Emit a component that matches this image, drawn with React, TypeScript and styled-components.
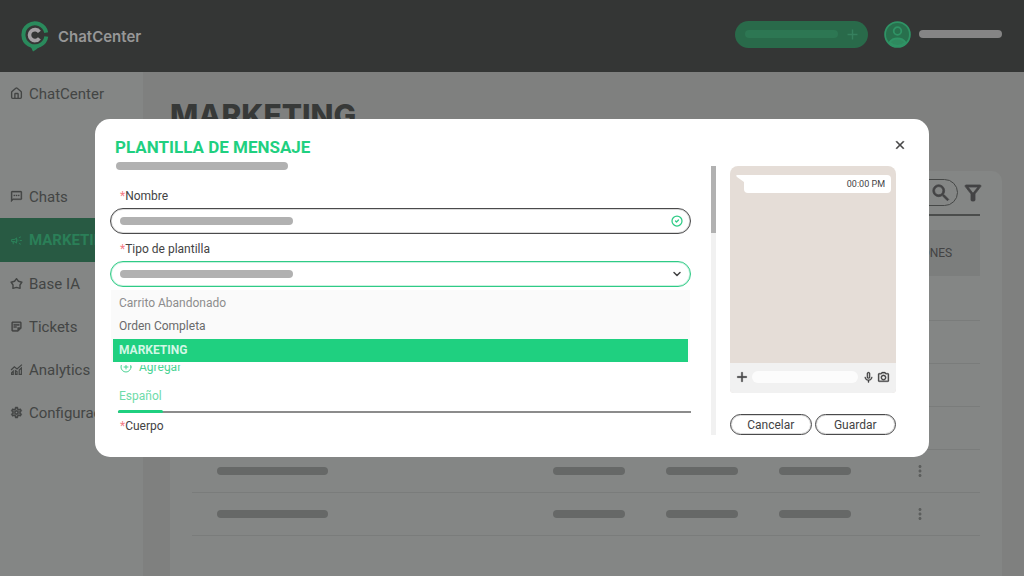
import React from "react";
import styled, { createGlobalStyle } from "styled-components";
import {
  MdOutlineSms,
  MdOutlineCampaign,
  MdOutlineStickyNote2,
  MdOutlineSettings,
  MdSearch,
  MdOutlineFilterAlt,
  MdMoreVert,
  MdMicNone,
  MdOutlineCameraAlt,
  MdAdd,
  MdClose,
} from "react-icons/md";
import { House, CircleCheck, ChevronDown, CirclePlus } from "lucide-react";

const GlobalStyle = createGlobalStyle`
  *, *::before, *::after { box-sizing: border-box; }
  body {
    margin: 0;
    background: #7f807f;
    font-family: Roboto, "Liberation Sans", sans-serif;
    color: #434344;
  }
  button, input, select { font: inherit; color: inherit; }
  button { cursor: pointer; }
  svg { display: block; flex: none; }
  svg[stroke-width] > path[fill="none"] { stroke: none; }
`;

const Shell = styled.div`
  min-height: 100vh;
  display: flex;
  flex-direction: column;
`;

const TopBar = styled.header`
  height: 72px;
  padding: 0 22px 4px 21px;
  display: flex;
  align-items: center;
  background: #343635;
`;

const Brand = styled.a`
  display: flex;
  align-items: center;
  gap: 9px;
  margin-right: auto;
  padding-top: 5px;
  color: #979797;
  font: 600 15px/20px Inter, sans-serif;
  text-decoration: none;
`;

const Skeleton = styled.span<{ $width: number; $color?: string }>`
  display: block;
  flex: none;
  width: ${(p) => p.$width}px;
  height: 8px;
  border-radius: 4px;
  background: ${(p) => p.$color ?? "#b1b1b1"};
`;

const CreateButton = styled.button`
  height: 27px;
  width: 133px;
  padding: 0 7px 0 10px;
  display: flex;
  align-items: center;
  justify-content: space-between;
  border: 0;
  border-radius: 14px;
  background: #296a4a;
  color: #36805e;
`;

const Account = styled.button`
  margin-left: 16px;
  padding: 0;
  display: flex;
  align-items: center;
  gap: 8px;
  border: 0;
  background: none;
`;

const Columns = styled.div`
  flex: 1;
  display: flex;
`;

const Sidebar = styled.nav`
  flex: none;
  width: 143px;
  background: #848685;
`;

const NavLink = styled.a<{ $active?: boolean; $last?: boolean }>`
  height: ${(p) => (p.$active ? 44 : 43)}px;
  margin-bottom: ${(p) => (p.$last ? 60 : 0)}px;
  padding-left: 10px;
  display: flex;
  align-items: center;
  gap: 6px;
  overflow: hidden;
  font-size: 15px;
  font-weight: ${(p) => (p.$active ? 700 : 400)};
  text-decoration: none;
  color: ${(p) => (p.$active ? "#2b7f58" : "#434544")};
  background: ${(p) => (p.$active ? "#285a43" : "none")};
`;

const Main = styled.main`
  flex: 1;
  min-width: 0;
  padding: 25px 22px 0 27px;
  display: flex;
  flex-direction: column;
`;

const PageTitle = styled.h1`
  margin: 0 0 38px;
  font: 800 30px/36px Inter, sans-serif;
  color: #373938;
`;

const Card = styled.section`
  flex: 1;
  padding: 8px 22px 0;
  border-radius: 10px 10px 0 0;
  background: #848685;
`;

const Toolbar = styled.div`
  display: flex;
  align-items: center;
  justify-content: flex-end;
  gap: 3px;
  margin-bottom: 14px;
  padding-bottom: 8px;
  border-bottom: 2px solid #4b4d4c;
`;

const SearchBox = styled.label`
  width: 220px;
  height: 27px;
  padding: 0 5px 0 12px;
  display: flex;
  align-items: center;
  border: 1px solid #464847;
  border-radius: 14px;
`;

const BareInput = styled.input`
  flex: 1;
  min-width: 0;
  padding: 0;
  border: 0;
  outline: 0;
  background: none;
`;

const IconButton = styled.button`
  padding: 0;
  border: 0;
  background: none;
`;

const FilterButton = styled(IconButton)`
  width: 19px;
`;

const CloseButton = styled(IconButton)`
  padding: 3px;
`;

const Table = styled.table`
  width: 100%;
  border-collapse: collapse;
  table-layout: fixed;

  th {
    height: 47px;
    padding: 0;
    border-bottom: 3px solid #848685;
    background: #7c7e7d;
    font-size: 12px;
    font-weight: 400;
  }
  td {
    height: 43px;
    padding: 0 0 0 25px;
    border-bottom: 1px solid #7a7c7b;
  }
  td:last-child { padding: 0 8px 0 0; }
  td button { margin: 0 auto; display: block; color: #5c5e5d; }
`;

const Overlay = styled.div`
  position: fixed;
  inset: 0;
  padding: 0 95px;
  display: grid;
  align-items: center;
`;

const Dialog = styled.div`
  padding: 16px 19px 22px 15px;
  border-radius: 15px;
  background: #fff;
`;

const DialogHeader = styled.div`
  display: flex;
  align-items: flex-start;
  justify-content: space-between;
  padding-left: 5px;
  margin-bottom: 3px;
`;

const DialogTitle = styled.h2`
  margin: 0;
  font-size: 17px;
  line-height: 24px;
  font-weight: 700;
  color: #1fd080;
`;

const DialogBody = styled.div`
  display: flex;
  padding-right: 14px;
`;

const Form = styled.form`
  flex: 1;
  min-width: 0;
  padding-bottom: 1px;
  font-size: 12px;
  line-height: 16px;
`;

const Intro = styled.div`
  padding-left: 6px;
  margin-bottom: 18px;
`;

const Field = styled.div`
  position: relative;
  margin-bottom: 7px;
`;

const Label = styled.label`
  display: block;
  padding-left: 10px;
  margin-bottom: 4px;

  &:last-child { margin-bottom: 0; }
`;

const Required = styled.span`
  color: #f47c86;
`;

const Control = styled.div<{ $focused?: boolean }>`
  height: 26px;
  padding: 0 7px 0 9px;
  display: flex;
  align-items: center;
  border: 1px solid ${(p) => (p.$focused ? "#2fcb86" : "#4a4a4b")};
  border-radius: 13px;
  box-shadow: inset 0 0 0 1px ${(p) => (p.$focused ? "#2fcb8644" : "#4a4a4b33")};
`;

const BareSelect = styled.select`
  flex: 1;
  min-width: 0;
  height: 20px;
  border: 0;
  outline: 0;
  appearance: none;
  background: none;
`;

const Menu = styled.ul`
  position: absolute;
  top: 100%;
  left: 1px;
  right: 1px;
  margin: 3px 0 0;
  padding: 2px 2px 0;
  list-style: none;
  background: #fafafa;
  border-bottom: 3px solid #fff;
`;

const Option = styled.li<{ $tone: string; $selected?: boolean }>`
  margin-top: ${(p) => (p.$selected ? 1 : 0)}px;
  padding-left: 6px;
  line-height: 23px;
  color: ${(p) => p.$tone};
  font-weight: ${(p) => (p.$selected ? 700 : 400)};
  background: ${(p) => (p.$selected ? "#1fd080" : "none")};
`;

const AddButton = styled.button`
  margin: 72px 0 13px;
  padding: 0 0 0 10px;
  display: flex;
  align-items: center;
  gap: 7px;
  border: 0;
  background: none;
  color: #4bd394;
`;

const TabList = styled.div`
  margin: 0 0 5px 8px;
  border-bottom: 2px solid #8c8c8c;
`;

const Tab = styled.button`
  position: relative;
  display: block;
  padding: 0 1px 7px;
  border: 0;
  background: none;
  color: #6fdba9;

  &::after {
    content: "";
    position: absolute;
    left: 0;
    right: 0;
    bottom: -2px;
    height: 3px;
    border-radius: 2px;
    background: #1fd080;
  }
`;

const ScrollTrack = styled.div`
  flex: none;
  width: 5px;
  margin: 4px 14px 0 20px;
  background: #f1f1f1;
`;

const ScrollThumb = styled.div`
  height: 25%;
  background: #b1b1b1;
`;

const Aside = styled.aside`
  flex: none;
  width: 166px;
  padding-top: 4px;
  display: flex;
  flex-direction: column;
  justify-content: space-between;
`;

const Phone = styled.div`
  height: 227px;
  display: flex;
  flex-direction: column;
  border-radius: 8px 8px 4px 4px;
  overflow: hidden;
  background: #e5ddd7;
`;

const Chat = styled.div`
  flex: 1;
  padding: 9px 5px 0 6px;
  display: flex;
  align-items: flex-start;
`;

const Bubble = styled.div`
  flex: 1;
  margin-left: -1px;
  padding-right: 6px;
  border-radius: 0 4px 4px 4px;
  background: #fff;
  font-size: 9px;
  line-height: 18px;
  text-align: right;
`;

const Composer = styled.div`
  height: 30px;
  padding: 0 6px 2px 4px;
  display: flex;
  align-items: center;
  background: #f1f1f1;
`;

const MessageInput = styled.input`
  flex: 1;
  min-width: 0;
  height: 12px;
  margin: 0 4px 0 2px;
  padding: 0 6px;
  border: 0;
  border-radius: 6px;
  background: #fcfcfc;
  font-size: 9px;
`;

const ComposerIcons = styled.div`
  display: flex;
  gap: 2px;
`;

const Actions = styled.div`
  display: flex;
  gap: 3px;
`;

const PillButton = styled.button`
  flex: 1;
  height: 21px;
  padding: 0;
  border: 1px solid #4a4a4b;
  border-radius: 11px;
  box-shadow: inset 0 0 0 1px #4a4a4b33;
  background: #fff;
  font-size: 12px;
  line-height: 16px;
`;

const AnalyticsIcon = () => (
  <svg width="13" height="13" viewBox="0 0 24 24">
    <g fill="none" stroke="currentColor" strokeWidth="2.2">
      <path d="M2 13l6-6 5 4 9-8" />
      <path d="M3 21v-3l3-3v6zM10 21v-7l3 2v5zM17 21v-8l4-4v12z" />
    </g>
  </svg>
);

const StarIcon = () => (
  <svg width="13" height="13" viewBox="0 0 24 24">
    <g fill="none" stroke="currentColor" strokeWidth="2.6" strokeLinejoin="round">
      <path d="M12 3l3.600 4.800 6.400 1.800-3.600 5.200.2 6.200-6.600-1.800-6.600 1.800.2-6.200L2 9.600l6.400-1.800z" />
    </g>
  </svg>
);

const AvatarIcon = () => (
  <svg width="27" height="27" viewBox="0 0 27 27">
    <g fill="none" stroke="#2f9365" strokeWidth="1.8">
      <circle cx="13.5" cy="13.5" r="12.4" fill="#28704d" />
      <circle cx="13.5" cy="10" r="3.8" />
      <path d="M5.500 21.500c2-3 5-4 8-4s6 1 8 4c-4.500 4.500-11.500 4.500-16 0z" fill="#2f8a5f" />
    </g>
  </svg>
);

const BrandMark = () => (
  <svg width="28" height="31" viewBox="0 0 28 31" aria-hidden="true">
    <g fill="none">
      <path d="M25.200 11.600A11.500 11.500 0 1 0 25.300 15.500" stroke="#2a8a5c" strokeWidth="4" />
      <path d="M18.400 10.800A5.500 5.500 0 1 0 18.400 17.400" stroke="#a3a0a3" strokeWidth="3.6" />
    </g>
    <path d="M9 24l12-1c-2 2.500-5 5-9 7.500z" fill="#2a8a5c" />
  </svg>
);

const navItems = [
  { label: "ChatCenter", icon: <House size={13} strokeWidth={2.5} />, last: true },
  { label: "Chats", icon: <MdOutlineSms size={13} strokeWidth={0.6} /> },
  { label: "MARKETING", icon: <MdOutlineCampaign size={13} />, active: true },
  { label: "Base IA", icon: <StarIcon /> },
  { label: "Tickets", icon: <MdOutlineStickyNote2 size={13} strokeWidth={0.8} /> },
  { label: "Analytics", icon: <AnalyticsIcon /> },
  { label: "Configuración", icon: <MdOutlineSettings size={13} strokeWidth={1} /> },
];

const rows = [1, 2, 3, 4, 5, 6];

export default function App() {
  return (
    <>
      <GlobalStyle />
      <Shell>
        <TopBar>
          <Brand href="#">
            <BrandMark />
            ChatCenter
          </Brand>
          <CreateButton aria-label="Crear">
            <Skeleton $width={93} $color="#2d7753" />
            <MdAdd size={17} />
          </CreateButton>
          <Account aria-label="Cuenta">
            <AvatarIcon />
            <Skeleton $width={83} $color="#858585" />
          </Account>
        </TopBar>
        <Columns>
          <Sidebar>
            {navItems.map((item) => (
              <NavLink key={item.label} href="#" $active={item.active} $last={item.last}>
                {item.icon}
                {item.label}
              </NavLink>
            ))}
          </Sidebar>
          <Main>
            <PageTitle>MARKETING</PageTitle>
            <Card>
              <Toolbar>
                <SearchBox>
                  <BareInput type="search" aria-label="Buscar" />
                  <MdSearch size={22} strokeWidth={0.8} />
                </SearchBox>
                <FilterButton aria-label="Filtrar">
                  <MdOutlineFilterAlt size={24} strokeWidth={0.8} />
                </FilterButton>
              </Toolbar>
              <Table>
                <colgroup>
                  <col />
                  <col width="113" />
                  <col width="113" />
                  <col width="113" />
                  <col width="113" />
                </colgroup>
                <thead>
                  <tr>
                    <th colSpan={4} />
                    <th>ACCIONES</th>
                  </tr>
                </thead>
                <tbody>
                  {rows.map((row) => (
                    <tr key={row}>
                      <td><Skeleton $width={111} $color="#666867" /></td>
                      <td><Skeleton $width={72} $color="#666867" /></td>
                      <td><Skeleton $width={72} $color="#666867" /></td>
                      <td><Skeleton $width={72} $color="#666867" /></td>
                      <td>
                        <IconButton aria-label="Más acciones">
                          <MdMoreVert size={18} />
                        </IconButton>
                      </td>
                    </tr>
                  ))}
                </tbody>
              </Table>
            </Card>
          </Main>
        </Columns>
      </Shell>

      <Overlay>
        <Dialog role="dialog" aria-modal="true" aria-labelledby="dialog-title">
          <DialogHeader>
            <DialogTitle id="dialog-title">PLANTILLA DE MENSAJE</DialogTitle>
            <CloseButton aria-label="Cerrar">
              <MdClose size={14} strokeWidth={0.8} />
            </CloseButton>
          </DialogHeader>
          <DialogBody>
            <Form>
              <Intro>
                <Skeleton $width={172} />
              </Intro>
              <Field>
                <Label htmlFor="name"><Required>*</Required>Nombre</Label>
                <Control>
                  <Skeleton $width={173} />
                  <BareInput id="name" type="text" />
                  <CircleCheck size={12} strokeWidth={2.5} color="#2fcb86" />
                </Control>
              </Field>
              <Field>
                <Label htmlFor="kind"><Required>*</Required>Tipo de plantilla</Label>
                <Control $focused>
                  <Skeleton $width={173} />
                  <BareSelect id="kind" />
                  <ChevronDown size={12} strokeWidth={3} />
                </Control>
                <Menu role="listbox" aria-label="Tipo de plantilla">
                  <Option role="option" $tone="#8d8d8d">Carrito Abandonado</Option>
                  <Option role="option" $tone="#6a6a6b">Orden Completa</Option>
                  <Option role="option" aria-selected $selected $tone="#d2f7e5">MARKETING</Option>
                </Menu>
              </Field>
              <AddButton type="button">
                <CirclePlus size={12} strokeWidth={2} />
                Agregar
              </AddButton>
              <TabList role="tablist">
                <Tab type="button" role="tab" aria-selected>Español</Tab>
              </TabList>
              <Label as="div"><Required>*</Required>Cuerpo</Label>
            </Form>
            <ScrollTrack><ScrollThumb /></ScrollTrack>
            <Aside>
              <Phone>
                <Chat>
                  <svg width="9" height="10" viewBox="0 0 9 10" aria-hidden="true">
                    <path d="M1 0h8v10l-1-1V7L1 2C0 1 0 0 1 0z" fill="#fff" />
                  </svg>
                  <Bubble>00:00 PM</Bubble>
                </Chat>
                <Composer>
                  <MdAdd size={16} strokeWidth={0.6} />
                  <MessageInput aria-label="Mensaje" />
                  <ComposerIcons>
                    <MdMicNone size={13} strokeWidth={0.6} />
                    <MdOutlineCameraAlt size={13} strokeWidth={0.6} />
                  </ComposerIcons>
                </Composer>
              </Phone>
              <Actions>
                <PillButton>Cancelar</PillButton>
                <PillButton>Guardar</PillButton>
              </Actions>
            </Aside>
          </DialogBody>
        </Dialog>
      </Overlay>
    </>
  );
}
